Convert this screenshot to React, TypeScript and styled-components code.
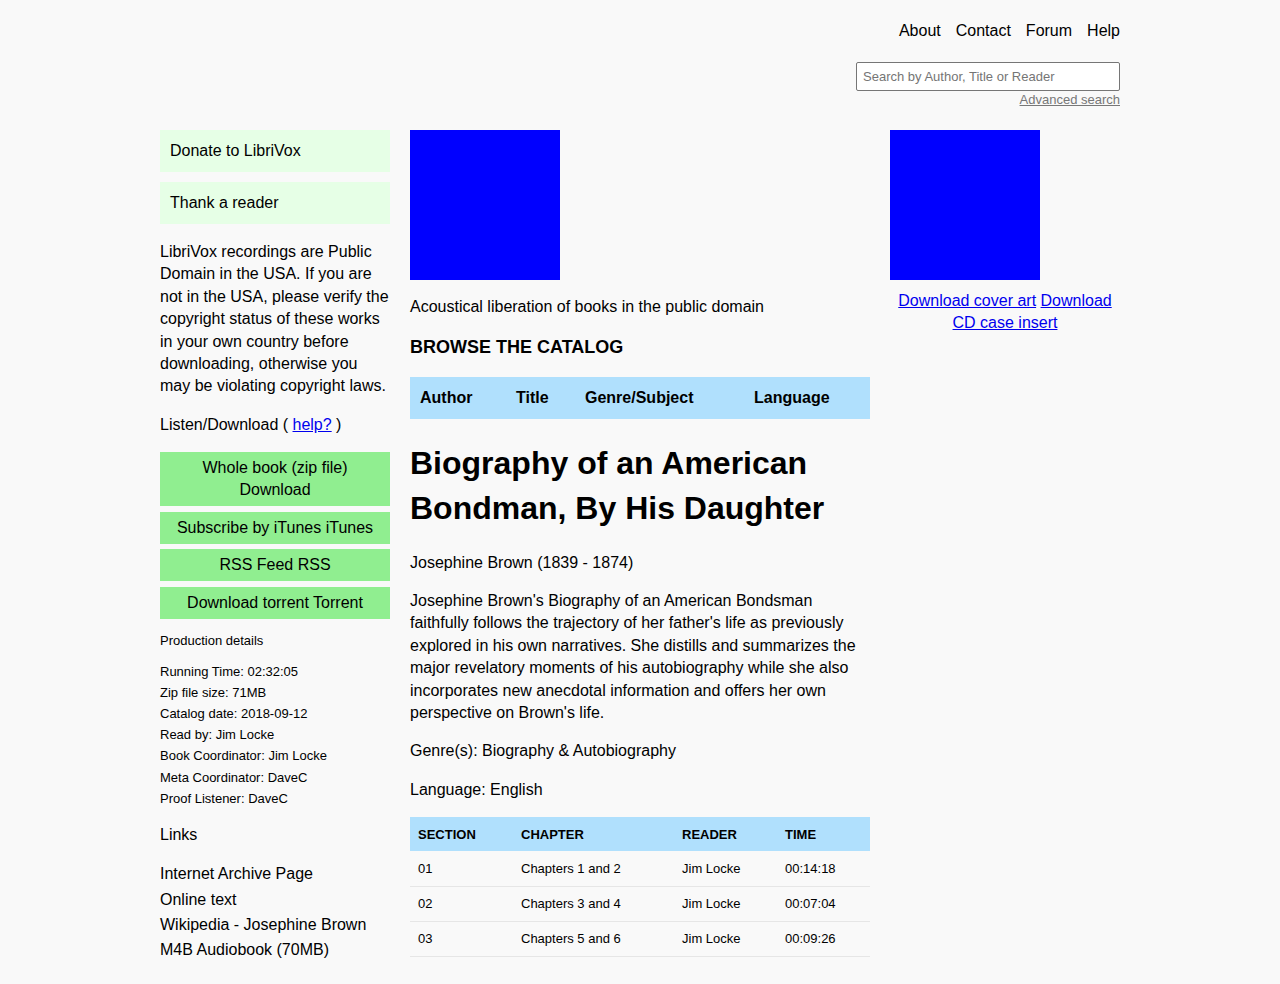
import React from "react";
import styled, { createGlobalStyle } from "styled-components";

const Global = createGlobalStyle`
  html, body { margin: 0; padding: 0; background: #f9f9f9; }
  body { font-family: "Liberation Sans", Arial, sans-serif; font-size: 16px; color: #000; }
  * { box-sizing: border-box; }
`;

const Page = styled.div`
  width: 960px;
  margin: 0 auto;
  padding: 21px 0 30px;
`;

const Header = styled.header`
  display: flex;
  flex-direction: column;
  align-items: flex-end;
`;

const Nav = styled.nav`
  display: flex;
  gap: 15px;
  line-height: 20px;
`;

const NavLink = styled.a`
  color: #000;
  text-decoration: none;
`;

const SearchInput = styled.input`
  margin-top: 21px;
  width: 264px;
  height: 29px;
  border: 1px solid #767676;
  border-radius: 2px;
  background: #fff;
  padding: 0 6px;
  font-family: "Liberation Sans", Arial, sans-serif;
  font-size: 13px;
  &::placeholder { color: #757575; }
`;

const AdvLink = styled.a`
  margin-top: 1px;
  font-size: 13px;
  line-height: 16px;
  color: #777;
  text-decoration: underline;
`;

const Main = styled.div`
  margin-top: 22px;
  display: grid;
  grid-template-columns: 230px 460px 230px;
  column-gap: 20px;
  align-items: start;
`;

const Column = styled.div`
  display: flex;
  flex-direction: column;
`;

const SoftBox = styled.div<{ $last?: boolean }>`
  background: #e6ffe6;
  padding: 10px;
  line-height: 22px;
  margin-bottom: ${(p) => (p.$last ? 0 : 10)}px;
`;

const Para = styled.p<{ $mt?: number }>`
  margin: ${(p) => p.$mt ?? 16}px 0 0;
  line-height: 22.4px;
`;

const BlueLink = styled.a`
  color: #0000ee;
  text-decoration: underline;
`;

const ButtonList = styled.div`
  margin-top: 16px;
  display: flex;
  flex-direction: column;
  gap: 5.5px;
`;

const GreenButton = styled.div`
  background: #90ee90;
  text-align: center;
  padding: 5px 10px;
  line-height: 22px;
`;

const SmallHead = styled.div`
  margin-top: 14.5px;
  font-size: 13px;
  line-height: 16px;
`;

const DetailList = styled.div`
  margin-top: 11.4px;
  font-size: 13px;
  line-height: 21.2px;
`;

const LinksHead = styled.div`
  margin-top: 15.4px;
  line-height: 22px;
`;

const LinkList = styled.div`
  margin-top: 15px;
  line-height: 25.3px;
`;

const Cover = styled.div`
  width: 150px;
  height: 150px;
  background: #0000ff;
`;

const BrowseTitle = styled.h3`
  margin: 18px 0 0;
  font-size: 18px;
  line-height: 22px;
  font-weight: bold;
`;

const BrowseBar = styled.div`
  margin-top: 19px;
  height: 42px;
  background: #b0e0fd;
  display: flex;
  align-items: center;
  font-weight: bold;
`;

const BrowseCell = styled.div<{ $w: number }>`
  width: ${(p) => p.$w}px;
  padding-left: 10px;
`;

const Title = styled.h1`
  margin: 21.6px 0 0;
  font-size: 32px;
  line-height: 44.8px;
  font-weight: bold;
`;

const SectionTable = styled.table`
  margin-top: 16px;
  width: 460px;
  border-collapse: collapse;
  font-size: 13px;
  table-layout: fixed;
`;

const Th = styled.th<{ $w?: number }>`
  background: #b0e0fd;
  text-align: left;
  font-weight: bold;
  height: 34px;
  padding: 0 8px;
  ${(p) => (p.$w ? `width: ${p.$w}px;` : "")}
`;

const Td = styled.td`
  height: 35px;
  padding: 0 8px;
  border-bottom: 1px solid #e6e6e6;
`;

const RightLinks = styled.div`
  margin-top: 10px;
  text-align: center;
  line-height: 22px;
`;

const rows = [
  ["01", "Chapters 1 and 2", "Jim Locke", "00:14:18"],
  ["02", "Chapters 3 and 4", "Jim Locke", "00:07:04"],
  ["03", "Chapters 5 and 6", "Jim Locke", "00:09:26"],
];

export default function App() {
  return (
    <>
      <Global />
      <Page>
        <Header>
          <Nav>
            <NavLink href="#">About</NavLink>
            <NavLink href="#">Contact</NavLink>
            <NavLink href="#">Forum</NavLink>
            <NavLink href="#">Help</NavLink>
          </Nav>
          <SearchInput placeholder="Search by Author, Title or Reader" />
          <AdvLink href="#">Advanced search</AdvLink>
        </Header>
        <Main>
          <Column>
            <SoftBox>Donate to LibriVox</SoftBox>
            <SoftBox $last>Thank a reader</SoftBox>
            <Para $mt={17}>
              LibriVox recordings are Public Domain in the USA. If you are not in the USA, please verify the
              copyright status of these works in your own country before downloading, otherwise you may be
              violating copyright laws.
            </Para>
            <Para>
              Listen/Download ( <BlueLink href="#">help?</BlueLink> )
            </Para>
            <ButtonList>
              <GreenButton>
                Whole book (zip file)
                <br />
                Download
              </GreenButton>
              <GreenButton>Subscribe by iTunes iTunes</GreenButton>
              <GreenButton>RSS Feed RSS</GreenButton>
              <GreenButton>Download torrent Torrent</GreenButton>
            </ButtonList>
            <SmallHead>Production details</SmallHead>
            <DetailList>
              <div>Running Time: 02:32:05</div>
              <div>Zip file size: 71MB</div>
              <div>Catalog date: 2018-09-12</div>
              <div>Read by: Jim Locke</div>
              <div>Book Coordinator: Jim Locke</div>
              <div>Meta Coordinator: DaveC</div>
              <div>Proof Listener: DaveC</div>
            </DetailList>
            <LinksHead>Links</LinksHead>
            <LinkList>
              <div>Internet Archive Page</div>
              <div>Online text</div>
              <div>Wikipedia - Josephine Brown</div>
              <div>M4B Audiobook (70MB)</div>
            </LinkList>
          </Column>

          <Column>
            <Cover />
            <Para $mt={16}>Acoustical liberation of books in the public domain</Para>
            <BrowseTitle>BROWSE THE CATALOG</BrowseTitle>
            <BrowseBar>
              <BrowseCell $w={96}>Author</BrowseCell>
              <BrowseCell $w={69}>Title</BrowseCell>
              <BrowseCell $w={169}>Genre/Subject</BrowseCell>
              <BrowseCell $w={126}>Language</BrowseCell>
            </BrowseBar>
            <Title>Biography of an American Bondman, By His Daughter</Title>
            <Para $mt={21}>Josephine Brown (1839 - 1874)</Para>
            <Para>
              Josephine Brown's Biography of an American Bondsman faithfully follows the trajectory of her
              father's life as previously explored in his own narratives. She distills and summarizes the major
              revelatory moments of his autobiography while she also incorporates new anecdotal information and
              offers her own perspective on Brown's life.
            </Para>
            <Para>Genre(s): Biography &amp; Autobiography</Para>
            <Para>Language: English</Para>
            <SectionTable>
              <thead>
                <tr>
                  <Th $w={103}>SECTION</Th>
                  <Th $w={161}>CHAPTER</Th>
                  <Th $w={103}>READER</Th>
                  <Th>TIME</Th>
                </tr>
              </thead>
              <tbody>
                {rows.map((r) => (
                  <tr key={r[0]}>
                    {r.map((c, i) => (
                      <Td key={i}>{c}</Td>
                    ))}
                  </tr>
                ))}
              </tbody>
            </SectionTable>
          </Column>

          <Column>
            <Cover />
            <RightLinks>
              <BlueLink href="#">Download cover art</BlueLink> <BlueLink href="#">Download CD case insert</BlueLink>
            </RightLinks>
          </Column>
        </Main>
      </Page>
    </>
  );
}
